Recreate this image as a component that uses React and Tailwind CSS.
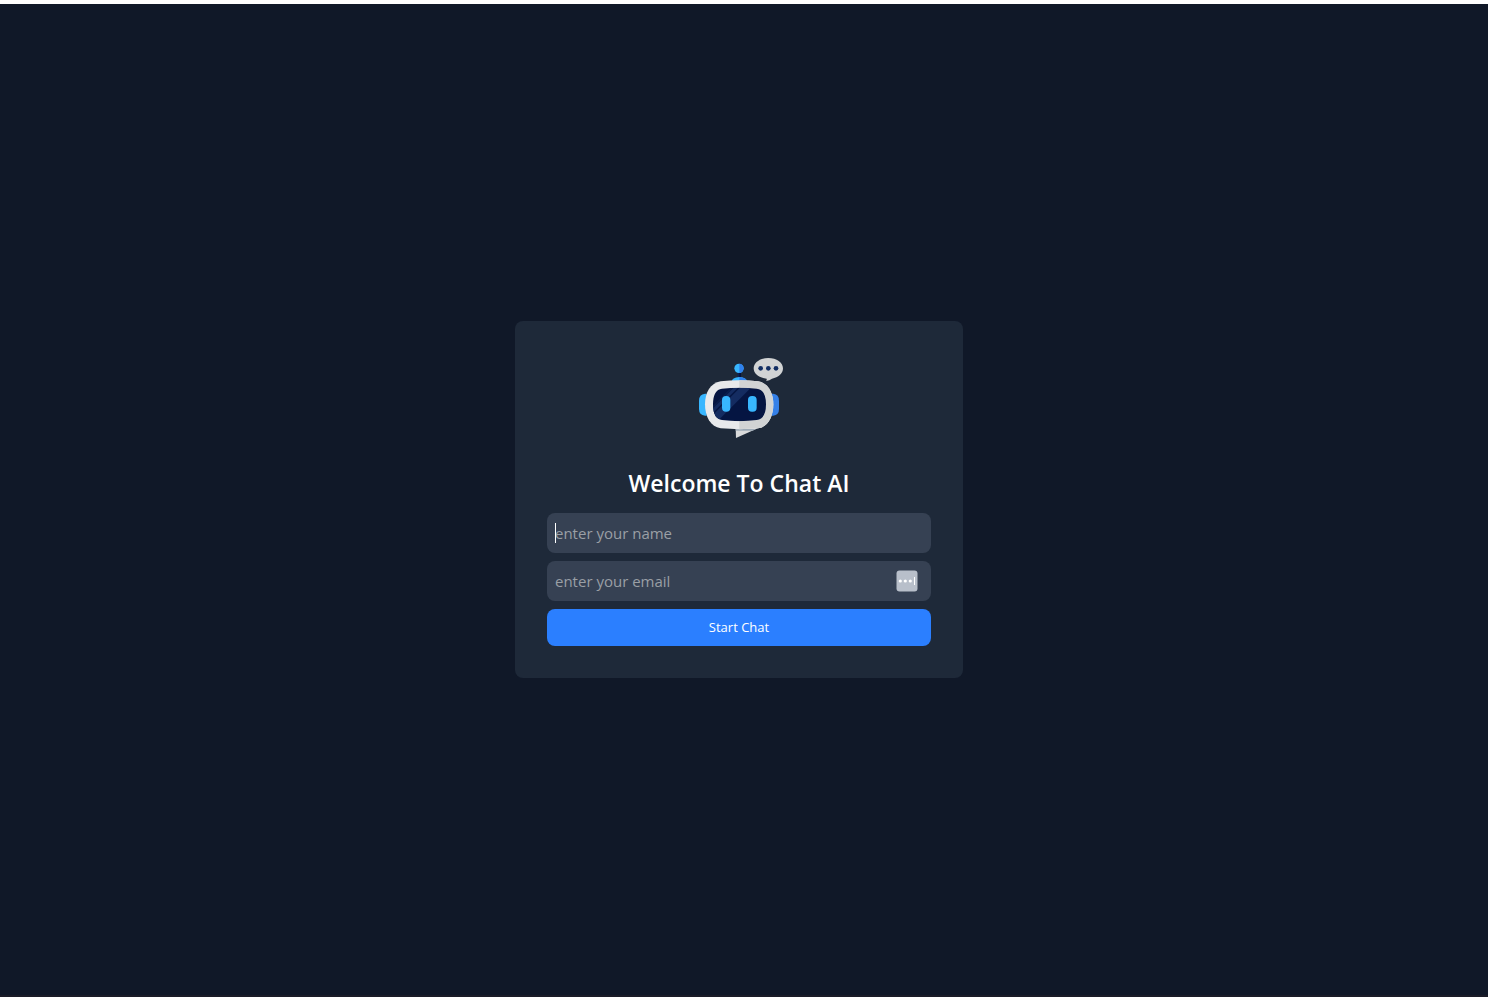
import React from "react";

function RobotLogo() {
  return (
    <svg viewBox="3 9 288 288" className="size-24" role="img" aria-label="Chat AI robot">
      <defs>
        <clipPath id="visor">
          <path d="M96 116Q148 110 200 116Q228 119 228 163Q228 207 200 210Q148 217 96 210Q69 207 69 163Q69 119 96 116Z" />
        </clipPath>
        <clipPath id="rightHalf">
          <rect x="148" y="30" width="140" height="250" />
        </clipPath>
      </defs>
      <rect x="143" y="64" width="5" height="22" fill="#0b2057" />
      <rect x="148" y="64" width="5" height="22" fill="#03103a" />
      <circle cx="147" cy="55" r="14" fill="#38b6ff" />
      <circle cx="147" cy="55" r="14" fill="#2f80ed" clipPath="url(#rightHalf)" />
      <path d="M124 97Q126 82 148 81Q170 82 172 97Z" fill="#38b6ff" />
      <path d="M124 97Q126 82 148 81Q170 82 172 97Z" fill="#2f80ed" clipPath="url(#rightHalf)" />
      <path d="M50 131H45Q27 133 27 152V177Q27 195 45 197H50Z" fill="#38b6ff" />
      <path d="M246 131H250Q267 133 267 152V177Q267 195 250 197H246Z" fill="#3580e8" />
      <path d="M137 232H210L138 264Z" fill="#d9dadb" />
      <path d="M137 237H198L188 242Q162 243 137 242Z" fill="#9ba8b5" />
      <path d="M92 94Q148 87 204 94C235 99 250 128 250 163C250 200 234 231 204 235Q148 240 92 235C62 231 45 200 45 163C45 128 61 99 92 94Z" fill="#e8e9eb" />
      <path d="M92 94Q148 87 204 94C235 99 250 128 250 163C250 200 234 231 204 235Q148 240 92 235C62 231 45 200 45 163C45 128 61 99 92 94Z" fill="#d1d3d4" clipPath="url(#rightHalf)" />
      <g clipPath="url(#visor)">
        <rect x="65" y="105" width="170" height="115" fill="#051542" />
        <path d="M65 179L135 109H187L80 216H65Z" fill="#142c61" />
        <path d="M65 192L148 109H154L65 198Z" fill="#051542" />
        <path d="M65 171L127 109H135L65 179Z" fill="#0a1d4c" />
      </g>
      <rect x="96" y="138" width="25" height="47" rx="12" fill="#38b6ff" />
      <rect x="174" y="138" width="26" height="47" rx="12" fill="#38b6ff" />
      <path d="M235 24C260 24 279 37 279 55C279 71 265 83 246 86Q239 92 228 93Q231 90 230 86C207 84 191 72 191 55C191 37 210 24 235 24Z" fill="#d1d3d4" />
      <circle cx="212" cy="55" r="7" fill="#102d63" />
      <circle cx="235" cy="55" r="7" fill="#102d63" />
      <circle cx="258" cy="55" r="7" fill="#102d63" />
    </svg>
  );
}

function AutofillIcon() {
  return (
    <svg viewBox="0 0 22 22" className="size-[22px]" aria-hidden="true">
      <rect x="0.5" y="0.5" width="21" height="21" rx="3" fill="#b8bfca" />
      <circle cx="4.3" cy="11" r="1.6" fill="#fff" />
      <circle cx="9.3" cy="11" r="1.6" fill="#fff" />
      <circle cx="14.3" cy="11" r="1.6" fill="#fff" />
      <rect x="18" y="7" width="1" height="8" fill="#fff" />
    </svg>
  );
}

const inputClass =
  "block h-10 w-full rounded-lg bg-[#364153] px-2 text-[15px] text-white outline-none placeholder:text-[#9a9fa5]";

export default function App() {
  return (
    <div className="flex min-h-screen flex-col border-t-4 border-b-2 border-t-white border-b-[#1b1c28] bg-[#101828] font-['Segoe_UI','Open_Sans',sans-serif] text-white">
      <main className="flex flex-1 items-center justify-center pr-2.5">
        <form
          className="flex w-full max-w-md flex-col items-center rounded-lg bg-[#1e2939] p-8"
          onSubmit={(e) => e.preventDefault()}
        >
          <RobotLogo />
          <h1 className="mt-[18px] mb-[14px] text-[23px] leading-8 font-semibold">Welcome To Chat AI</h1>
          <div className="flex w-full flex-col gap-2">
            <div className="relative">
              <input type="text" aria-label="Name" placeholder="enter your name" className={inputClass} />
              <span className="absolute inset-y-2.5 left-2 w-px bg-white" />
            </div>
            <div className="relative">
              <input type="email" aria-label="Email" placeholder="enter your email" className={inputClass} />
              <span className="absolute inset-y-0 right-[13px] flex items-center">
                <AutofillIcon />
              </span>
            </div>
            <button type="submit" className="rounded-lg bg-[#2b7fff] p-2 text-[13px] leading-[21px]">
              Start Chat
            </button>
          </div>
        </form>
      </main>
    </div>
  );
}
